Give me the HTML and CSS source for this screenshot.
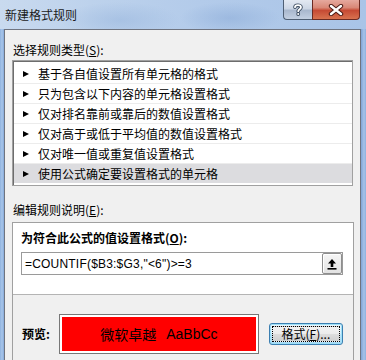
FILE: index.html
```
<!DOCTYPE html>
<html lang="zh-CN">
<head>
    <meta charset="UTF-8">
    <title>新建格式规则</title>
    <link rel="stylesheet" href="styles.css">
</head>
<body>
    <div class="titlebar">
        <span class="title">新建格式规则</span>
        <div class="caption-buttons">
            <div class="cap-btn help">
                <svg width="12" height="13" viewBox="0 0 12 13">
                    <path d="M3 4.2 C3 1.5 9 1.5 9 4.2 C9 6.2 6.2 6.2 6.2 8.2" fill="none" stroke="#3a4a5e" stroke-width="3.6" stroke-linecap="round"/>
                    <circle cx="6.2" cy="11" r="1.9" fill="#3a4a5e"/>
                    <path d="M3 4.2 C3 1.5 9 1.5 9 4.2 C9 6.2 6.2 6.2 6.2 8.2" fill="none" stroke="#fff" stroke-width="1.8" stroke-linecap="round"/>
                    <circle cx="6.2" cy="11" r="1" fill="#fff"/>
                </svg>
            </div>
            <div class="cap-btn close">
                <svg width="16" height="12" viewBox="0 0 16 12">
                    <path d="M3 2 L13 10 M13 2 L3 10" stroke="#4a1a14" stroke-width="4.4" stroke-linecap="round"/>
                    <path d="M3 2 L13 10 M13 2 L3 10" stroke="#fff" stroke-width="2.4" stroke-linecap="round"/>
                </svg>
            </div>
        </div>
    </div>

    <div class="client">
        <div class="group-label">选择规则类型(<u>S</u>):</div>
        <ul class="rule-list">
            <li>基于各自值设置所有单元格的格式</li>
            <li>只为包含以下内容的单元格设置格式</li>
            <li>仅对排名靠前或靠后的数值设置格式</li>
            <li>仅对高于或低于平均值的数值设置格式</li>
            <li>仅对唯一值或重复值设置格式</li>
            <li class="selected">使用公式确定要设置格式的单元格</li>
        </ul>

        <div class="group-label second">编辑规则说明(<u>E</u>):</div>
        <div class="desc-panel">
            <div class="desc-top">
                <div class="bold-label">为符合此公式的值设置格式(<u>O</u>):</div>
                <div class="formula">
                    <span class="formula-text">=COUNTIF($B3:$G3,"&lt;6")&gt;=3</span>
                    <span class="collapse-btn">
                        <svg width="10" height="12" viewBox="0 0 10 12">
                            <path d="M5 1 L9 5.5 L6.3 5.5 L6.3 9 L3.7 9 L3.7 5.5 L1 5.5 Z" fill="#000"/>
                            <rect x="0.5" y="10" width="9" height="1.6" fill="#000"/>
                        </svg>
                    </span>
                </div>
            </div>
            <div class="preview-row">
                <span class="bold-label">预览:</span>
                <div class="preview-box">
                    <div class="preview-fill"><span class="cjk">微软卓越</span><span class="latin">AaBbCc</span></div>
                </div>
                <button class="fmt-btn"><span class="focus-rect">格式(<u>F</u>)...</span></button>
            </div>
        </div>
    </div>
</body>
</html>
```

FILE: styles.css
```
body {
    margin: 0;
    width: 366px;
    height: 360px;
    overflow: hidden;
    font-family: "Noto Sans CJK SC", "Liberation Sans", sans-serif;
    font-size: 12px;
    color: #000;
    background:
        linear-gradient(to right, #8fb2de 0, #a9c6ea 2px, #86aad9 4px, transparent 4px, transparent 361px, #7fa4d6 361px, #a7c3e8 364px, #8bb0de 366px),
        linear-gradient(to bottom, #c2d6ee, #a8c3e6);
}

.titlebar {
    height: 29px;
    display: flex;
    justify-content: space-between;
    align-items: flex-start;
    padding: 0 6px 0 5px;
    background:
        radial-gradient(ellipse 60px 18px at 120px 20px, rgba(150, 180, 220, 0.5), transparent),
        radial-gradient(ellipse 50px 16px at 230px 18px, rgba(140, 172, 216, 0.55), transparent),
        linear-gradient(to right, #c9daef 0, #bdd2ec 90px, #b3cbea 200px, #a9c4e7 366px);
}

.title {
    margin-top: 7px;
    line-height: 16px;
    color: #1a1a1a;
}

.caption-buttons {
    display: flex;
}

.cap-btn {
    height: 19px;
    border: 1px solid #4f5f74;
    border-top: none;
    display: flex;
    align-items: center;
    justify-content: center;
}

.cap-btn.help {
    width: 28px;
    border-radius: 0 0 0 4px;
    border-right: none;
    background: linear-gradient(to bottom, #e3e9f2 0, #cdd7e5 45%, #a9b8ce 55%, #c3d0e2 100%);
}

.cap-btn.close {
    width: 46px;
    border-radius: 0 0 4px 0;
    border-color: #6b2a22;
    background: linear-gradient(to bottom, #e6a99e 0, #d98877 40%, #c64a34 55%, #d8724f 100%);
}

.client {
    margin-left: 4px;
    width: 357px;
    height: 331px;
    box-sizing: border-box;
    border: 1px solid #6f7480;
    border-bottom: none;
    background: #f0f0f0;
    padding: 0 7px;
    overflow: hidden;
}

.group-label {
    margin-top: 12px;
    line-height: 16px;
    padding-left: 1px;
}

.group-label.second {
    margin-top: 16px;
}

u {
    text-decoration: underline;
    text-underline-offset: 1px;
}

.rule-list {
    list-style: none;
    margin: 2px 0 0;
    padding: 3px 0 0;
    width: 341px;
    height: 126px;
    box-sizing: border-box;
    background: #fff;
    border: 1px solid #a0a0a0;
    box-shadow: inset 1px 1px 0 #6d6d6d;
}

.rule-list li {
    height: 19px;
    line-height: 19px;
    padding-left: 9px;
    margin-left: 1px;
    border-bottom: 1px solid #ececec;
    display: flex;
    align-items: center;
}

.rule-list li:last-child {
    border-bottom: none;
}

.rule-list li::before {
    content: "";
    border-left: 6px solid #000;
    border-top: 3.5px solid transparent;
    border-bottom: 3.5px solid transparent;
    margin-right: 9px;
}

.rule-list li.selected {
    background: #dcdcdf;
}

.desc-panel {
    margin-top: 4px;
    width: 342px;
    height: 140px;
    box-sizing: border-box;
    border: 1px solid #a0a0a0;
    border-bottom: none;
}

.desc-top {
    background: #fff;
    padding: 7px 10px 19px 8px;
    border-bottom: 1px solid #b4b4b4;
}

.bold-label {
    font-weight: bold;
    line-height: 16px;
}

.formula {
    margin-top: 6px;
    height: 23px;
    box-sizing: border-box;
    border: 1px solid #9a9a9a;
    display: flex;
    align-items: center;
    justify-content: space-between;
    background: #fff;
}

.formula-text {
    font-family: "Liberation Sans", sans-serif;
    font-size: 12px;
    letter-spacing: 0.2px;
    padding-left: 3px;
}

.collapse-btn {
    width: 20px;
    height: 21px;
    box-sizing: border-box;
    border: 1px solid #8e8e8e;
    border-radius: 2px;
    background: linear-gradient(to bottom, #f6f6f6, #e2e2e2);
    box-shadow: inset 1px 1px 0 #fff;
    display: flex;
    align-items: center;
    justify-content: center;
}

.preview-row {
    display: flex;
    align-items: center;
    padding: 19px 0 0 9px;
}

.preview-box {
    margin-left: 9px;
    width: 200px;
    height: 40px;
    box-sizing: border-box;
    border: 1px solid #777;
    padding: 2px;
    background: #fff;
}

.preview-fill {
    height: 100%;
    background: #ff0000;
    display: flex;
    align-items: center;
    justify-content: center;
    font-size: 14px;
}

.preview-fill .latin {
    font-family: "Liberation Sans", sans-serif;
    margin-left: 10px;
}

.fmt-btn {
    margin-left: 10px;
    width: 74px;
    height: 22px;
    padding: 2px;
    font-family: inherit;
    font-size: 12px;
    border: 1px solid #3c7fb1;
    border-radius: 3px;
    background: linear-gradient(to bottom, #eaf6fd 0, #d9f0fc 50%, #bee6fd 51%, #a7d9f5 100%);
    box-shadow: inset 0 0 0 1px #9ee0f7;
}

.focus-rect {
    display: block;
    height: 100%;
    box-sizing: border-box;
    border: 1px dotted #000;
    line-height: 14px;
    background: linear-gradient(to bottom, #f2f2f2 0, #ebebeb 50%, #dddddd 51%, #cfcfcf 100%);
}
```
